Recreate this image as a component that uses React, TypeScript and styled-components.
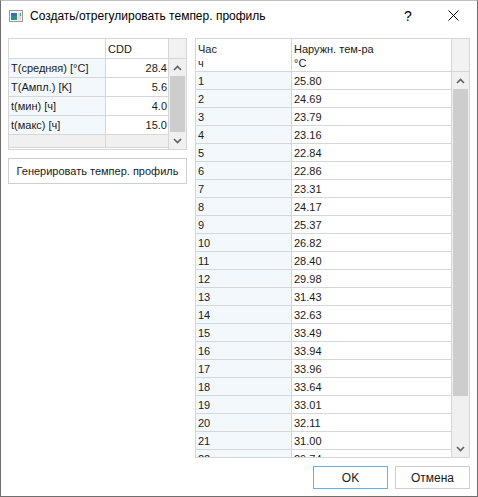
import React from "react";
import styled, { createGlobalStyle } from "styled-components";

const GlobalStyle = createGlobalStyle`
  html, body {
    margin: 0;
    padding: 0;
    background: #ffffff;
  }
  body {
    font-family: "Liberation Sans", Arial, sans-serif;
    color: #1a1a1a;
  }
`;

const LINE = "#d6d6d6";

const Window = styled.div`
  width: 478px;
  height: 497px;
  box-sizing: border-box;
  border: 1px solid #6f6f6f;
  border-top-color: #bdbdbd;
  background: #fff;
  display: flex;
  flex-direction: column;
  overflow: hidden;
`;

const TitleBar = styled.div`
  height: 29px;
  flex-shrink: 0;
  display: flex;
  align-items: center;
  padding-left: 8px;
`;

const Caption = styled.span`
  margin-left: 7px;
  font-size: 12px;
  color: #000;
  white-space: nowrap;
`;

const TitleButtons = styled.div`
  margin-left: auto;
  display: flex;
  align-items: center;
`;

const HelpMark = styled.span`
  font-size: 14px;
  color: #000;
  width: 16px;
  text-align: center;
  margin-right: 14px;
`;

const CloseBox = styled.div`
  width: 46px;
  height: 29px;
  display: flex;
  align-items: center;
  justify-content: center;
  margin-right: 1px;
`;

const Content = styled.div`
  display: flex;
  gap: 8px;
  padding: 8px 7px 0 7px;
`;

const LeftColumn = styled.div`
  width: 179px;
  display: flex;
  flex-direction: column;
  gap: 8px;
`;

const Table = styled.div<{ $height: number }>`
  height: ${(p) => p.$height}px;
  box-sizing: border-box;
  border: 1px solid ${LINE};
  display: flex;
  flex-direction: column;
  overflow: hidden;
  font-size: 11px;
  background: #fff;
`;

const HeaderRow = styled.div<{ $cols: string; $height: number }>`
  display: grid;
  grid-template-columns: ${(p) => p.$cols};
  height: ${(p) => p.$height}px;
  flex-shrink: 0;
  box-sizing: border-box;
  border-bottom: 1px solid ${LINE};
`;

const HeadCell = styled.div<{ $filler?: boolean }>`
  border-right: 1px solid ${LINE};
  padding: 3px 2px 0 2px;
  line-height: 14px;
  background: ${(p) => (p.$filler ? "#f2f2f2" : "#fff")};
  &:last-child {
    border-right: none;
  }
`;

const TableBody = styled.div`
  flex: 1;
  min-height: 0;
  display: flex;
`;

const Rows = styled.div`
  flex: 1;
  overflow: hidden;
`;

const Row = styled.div<{ $cols: string; $height: number; $blank?: boolean }>`
  display: grid;
  grid-template-columns: ${(p) => p.$cols};
  height: ${(p) => p.$height}px;
  box-sizing: border-box;
  border-bottom: 1px solid ${LINE};
  background: ${(p) => (p.$blank ? "#f0f0f0" : "transparent")};
`;

const Cell = styled.div<{ $right?: boolean; $tint?: boolean }>`
  display: flex;
  align-items: center;
  justify-content: ${(p) => (p.$right ? "flex-end" : "flex-start")};
  padding: 0 2px;
  border-right: 1px solid ${LINE};
  background: ${(p) => (p.$tint ? "#f3f8fd" : "transparent")};
  white-space: nowrap;
  overflow: hidden;
  &:last-child {
    border-right: none;
  }
`;

const ScrollBar = styled.div`
  width: 17px;
  flex-shrink: 0;
  background: #f0f0f0;
  border-left: 1px solid ${LINE};
  display: flex;
  flex-direction: column;
`;

const ScrollArrow = styled.div`
  height: 17px;
  flex-shrink: 0;
  display: flex;
  align-items: center;
  justify-content: center;
`;

const Track = styled.div`
  flex: 1;
  padding: 0 1px;
  display: flex;
  flex-direction: column;
`;

const Thumb = styled.div`
  background: #cdcdcd;
`;

const Button = styled.button<{ $primary?: boolean; $width?: number }>`
  height: ${(p) => (p.$width ? 23 : 26)}px;
  width: ${(p) => (p.$width ? `${p.$width}px` : "100%")};
  box-sizing: border-box;
  border: 1px solid ${(p) => (p.$primary ? "#6aaee4" : "#cfcfcf")};
  background: #fff;
  font-family: "Liberation Sans", Arial, sans-serif;
  font-size: ${(p) => (p.$width ? 12 : 11)}px;
  color: #1a1a1a;
  padding: 0;
`;

const Footer = styled.div`
  display: flex;
  justify-content: flex-end;
  gap: 7px;
  padding: 8px 7px 0 7px;
`;

const Chevron: React.FC<{ up?: boolean }> = ({ up }) => (
  <svg width="9" height="6" viewBox="0 0 9 6">
    <polyline
      points={up ? "1,5 4.5,1.5 8,5" : "1,1 4.5,4.5 8,1"}
      fill="none"
      stroke="#606060"
      strokeWidth="1.6"
    />
  </svg>
);

const Scroller: React.FC<{ thumb: number }> = ({ thumb }) => (
  <ScrollBar>
    <ScrollArrow>
      <Chevron up />
    </ScrollArrow>
    <Track>
      <Thumb style={{ height: thumb }} />
    </Track>
    <ScrollArrow>
      <Chevron />
    </ScrollArrow>
  </ScrollBar>
);

// small app-window glyph shown left of the caption
const WindowIcon = () => (
  <svg width="14" height="12" viewBox="0 0 14 12">
    <rect x="0.5" y="0.5" width="13" height="11" fill="#f4f4f4" stroke="#9a9a9a" />
    <rect x="2" y="3" width="6" height="7" fill="#2e8f8a" />
    <rect x="2" y="3" width="6" height="3" fill="#3d6fb0" />
    <rect x="9" y="3" width="3" height="7" fill="#dcdcdc" />
    <rect x="11" y="3" width="1" height="3" fill="#3fa36b" />
  </svg>
);

const params = [
  { name: "T(средняя) [°C]", value: "28.4" },
  { name: "T(Ампл.) [K]", value: "5.6" },
  { name: "t(мин) [ч]", value: "4.0" },
  { name: "t(макс) [ч]", value: "15.0" },
];

const temps = [
  "25.80", "24.69", "23.79", "23.16", "22.84", "22.86", "23.31", "24.17",
  "25.37", "26.82", "28.40", "29.98", "31.43", "32.63", "33.49", "33.94",
  "33.96", "33.64", "33.01", "32.11", "31.00", "29.74",
];

const LEFT_COLS = "97px 63px";
const RIGHT_COLS = "96px 160px";

const App: React.FC = () => {
  return (
    <>
      <GlobalStyle />
      <Window>
        <TitleBar>
          <WindowIcon />
          <Caption>Создать/отрегулировать темпер. профиль</Caption>
          <TitleButtons>
            <HelpMark>?</HelpMark>
            <CloseBox>
              <svg width="11" height="11" viewBox="0 0 11 11">
                <path d="M0.5 0.5 L10.5 10.5 M10.5 0.5 L0.5 10.5" stroke="#000" strokeWidth="1" />
              </svg>
            </CloseBox>
          </TitleButtons>
        </TitleBar>

        <Content>
          <LeftColumn>
            <Table $height={112}>
              <HeaderRow $cols={`${LEFT_COLS} 1fr`} $height={20}>
                <HeadCell />
                <HeadCell>CDD</HeadCell>
                <HeadCell $filler />
              </HeaderRow>
              <TableBody>
                <Rows>
                  {params.map((p) => (
                    <Row key={p.name} $cols={LEFT_COLS} $height={19}>
                      <Cell $tint>{p.name}</Cell>
                      <Cell $right>{p.value}</Cell>
                    </Row>
                  ))}
                  <Row $cols={LEFT_COLS} $height={13} $blank>
                    <Cell />
                    <Cell />
                  </Row>
                </Rows>
                <Scroller thumb={56} />
              </TableBody>
            </Table>
            <Button>Генерировать темпер. профиль</Button>
          </LeftColumn>

          <Table $height={420} style={{ flex: 1 }}>
            <HeaderRow $cols={`${RIGHT_COLS} 1fr`} $height={33}>
              <HeadCell>
                Час
                <br />ч
              </HeadCell>
              <HeadCell>
                Наружн. тем-ра
                <br />
                °C
              </HeadCell>
              <HeadCell $filler />
            </HeaderRow>
            <TableBody>
              <Rows>
                {temps.map((t, i) => (
                  <Row key={i} $cols={RIGHT_COLS} $height={18}>
                    <Cell $tint>{i + 1}</Cell>
                    <Cell>{t}</Cell>
                  </Row>
                ))}
              </Rows>
              <Scroller thumb={307} />
            </TableBody>
          </Table>
        </Content>

        <Footer>
          <Button $primary $width={75}>
            OK
          </Button>
          <Button $width={75}>Отмена</Button>
        </Footer>
      </Window>
    </>
  );
};

export default App;
